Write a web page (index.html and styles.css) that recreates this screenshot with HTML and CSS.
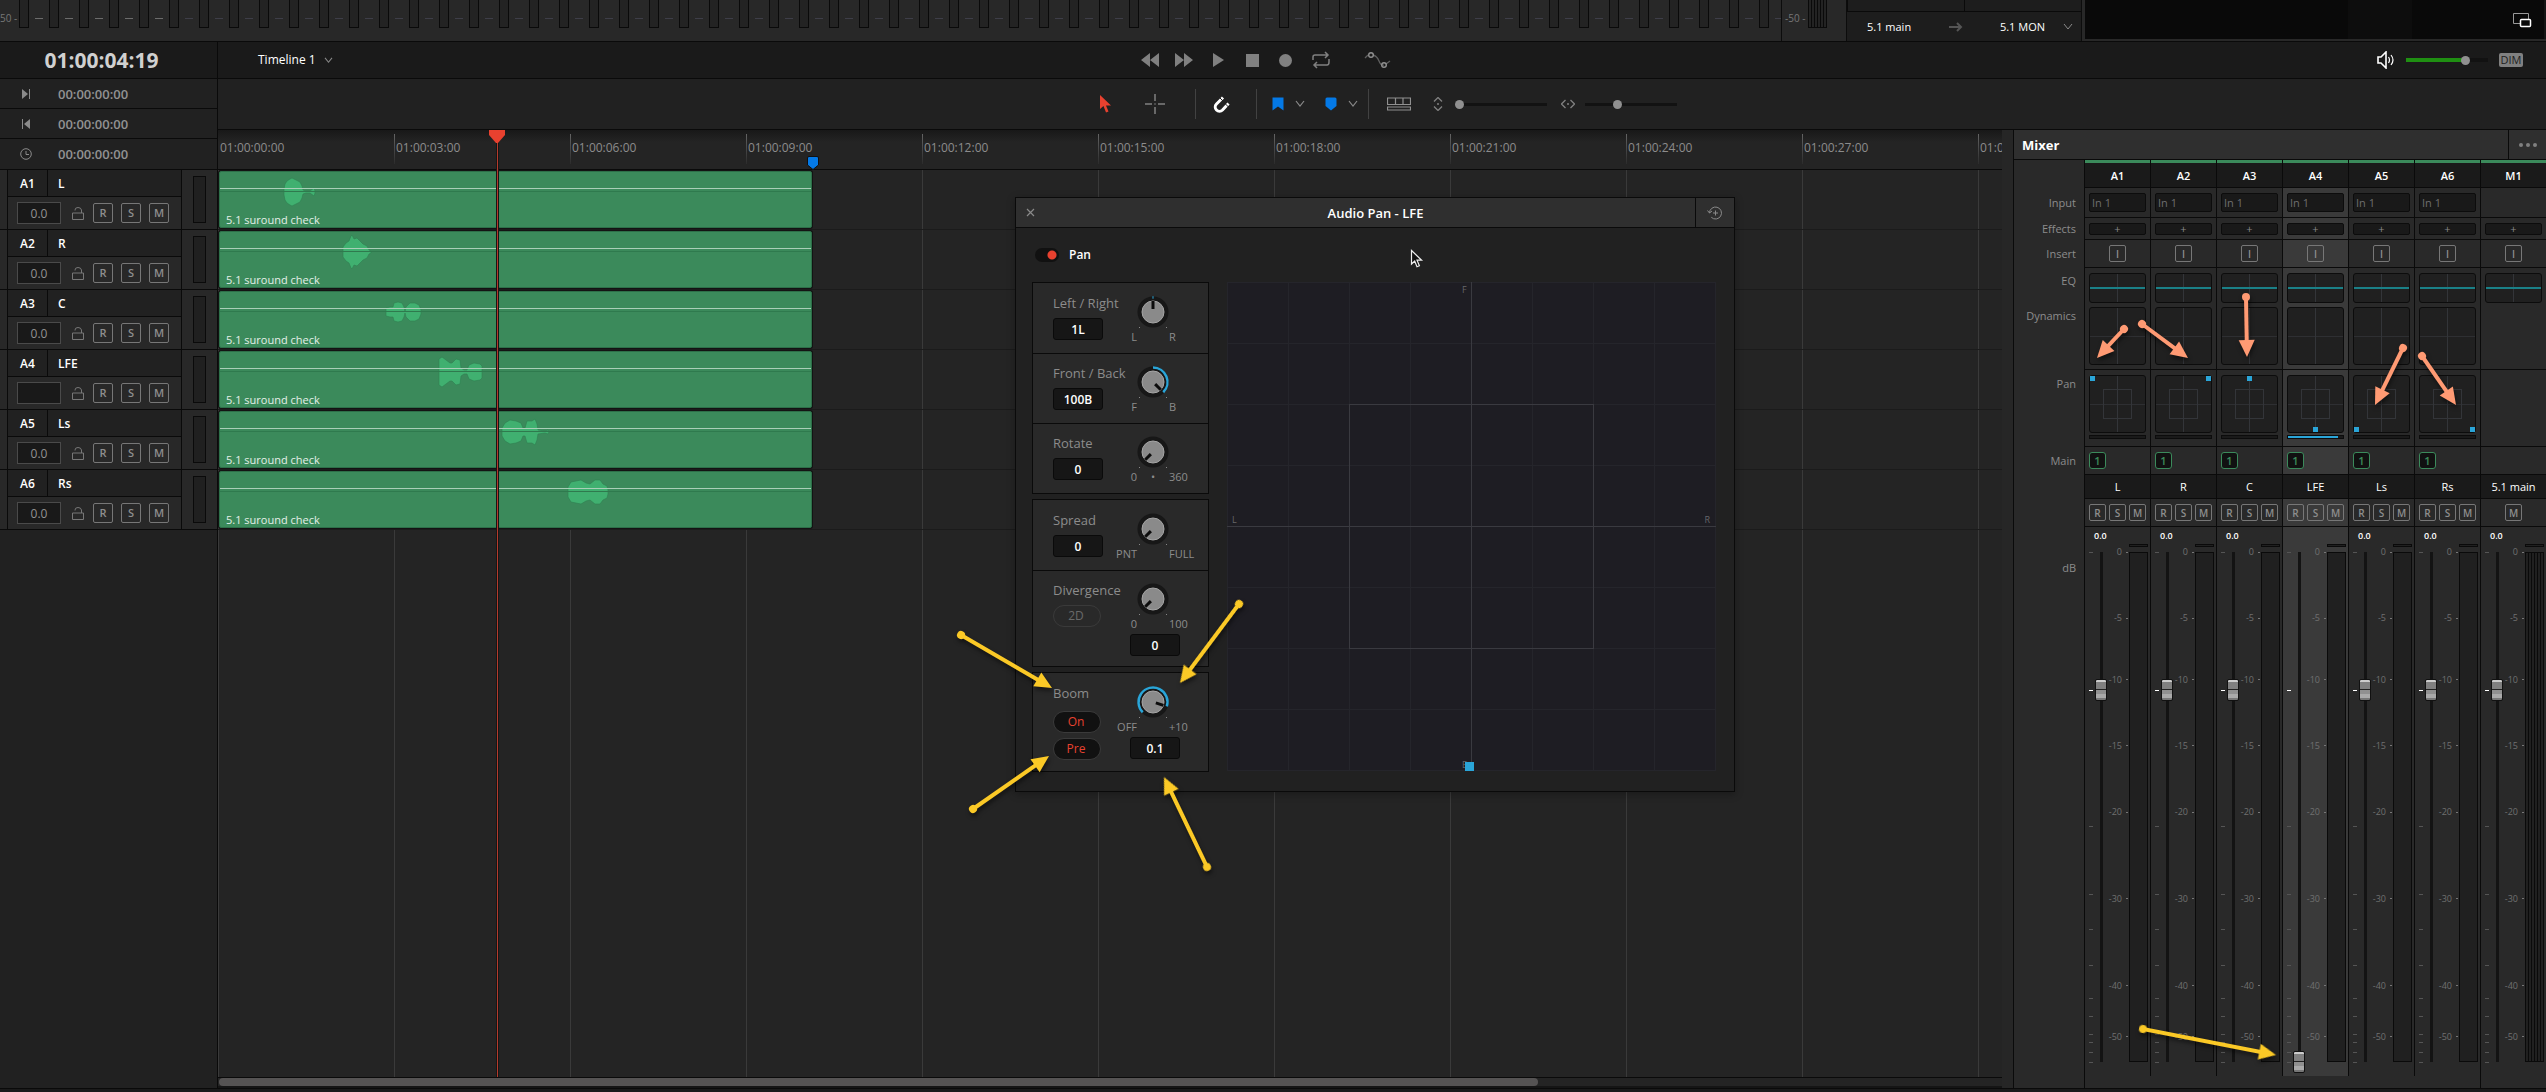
FILE: index.html
```html
<!DOCTYPE html>
<html lang="en">
<head>
<meta charset="utf-8">
<title>Audio timeline</title>
<link rel="stylesheet" href="styles.css">
</head>
<body>
<div class="app">

  <header class="monitor">
    <div class="meter-bridge">
      <span class="scale-label">50 -</span>
      <div class="bridge-bars" id="bridge"></div>
    </div>
    <div class="bus-meter">
      <span class="scale-label">-50 -</span>
      <div class="bus-bars"><i></i><i></i><i></i><i></i><i></i><i></i></div>
    </div>
    <div class="bus-panel">
      <div class="bus-top"><span></span><span></span></div>
      <div class="bus-route">
        <span>5.1 main</span>
        <svg class="icon" width="14" height="10" viewBox="0 0 14 10"><path d="M0 5h12M8 1l4 4-4 4" fill="none" stroke="#555" stroke-width="2"/></svg>
        <button class="plain route-out">5.1 MON
          <svg width="10" height="8" viewBox="0 0 10 8"><path d="M1 1l4 5 4-5" fill="none" stroke="#8a8a8a"/></svg>
        </button>
      </div>
    </div>
    <div class="viewer">
      <div class="viewer-band"></div>
      <button class="plain" aria-label="Detach viewer">
        <svg width="20" height="16" viewBox="0 0 20 16"><path d="M8 11.500H1.500V1.500H16.500V7" fill="none" stroke="#999"/><rect x="8.500" y="7.500" width="10" height="7" rx="1" fill="#0a0a0a" stroke="#fff" stroke-width="1.500"/></svg>
      </button>
    </div>
  </header>

  <div class="body">
    <aside class="side">
      <div class="timecode">01:00:04:19</div>
      <div class="info"><svg width="12" height="12" viewBox="0 0 12 12"><path d="M2 1l6 5-6 5z" fill="#8a8a8a"/><path d="M9.500 1v10" stroke="#8a8a8a"/></svg><span>00:00:00:00</span></div>
      <div class="info"><svg width="12" height="12" viewBox="0 0 12 12"><path d="M10 1L4 6l6 5z" fill="#8a8a8a"/><path d="M2.500 1v10" stroke="#8a8a8a"/></svg><span>00:00:00:00</span></div>
      <div class="info"><svg width="12" height="12" viewBox="0 0 12 12"><circle cx="6" cy="6" r="5.300" fill="none" stroke="#8a8a8a"/><path d="M6 3v3.500h3" fill="none" stroke="#8a8a8a"/></svg><span>00:00:00:00</span></div>
      <div id="tracks"></div>
    </aside>

    <div class="stage">
      <div class="transport">
        <button class="plain timeline-name">Timeline 1
          <svg width="9" height="7" viewBox="0 0 10 8"><path d="M1 1l4 5 4-5" fill="none" stroke="#8a8a8a" stroke-width="1.200"/></svg>
        </button>
        <div class="transport-buttons">
          <button class="plain" aria-label="Rewind"><svg width="18" height="14" viewBox="0 0 18 14"><path d="M9 0v14L0 7zM18 0v14L9 7z" fill="#808080"/></svg></button>
          <button class="plain" aria-label="Fast forward"><svg width="18" height="14" viewBox="0 0 18 14"><path d="M0 0v14l9-7zM9 0v14l9-7z" fill="#808080"/></svg></button>
          <button class="plain" aria-label="Play"><svg width="11" height="14" viewBox="0 0 11 14"><path d="M0 0v14l11-7z" fill="#808080"/></svg></button>
          <button class="plain" aria-label="Stop"><svg width="13" height="13" viewBox="0 0 13 13"><path d="M0 0h13v13H0z" fill="#808080"/></svg></button>
          <button class="plain" aria-label="Record"><svg width="13" height="13" viewBox="0 0 13 13"><circle cx="6.500" cy="6.500" r="6.500" fill="#808080"/></svg></button>
          <button class="plain" aria-label="Loop"><svg width="18" height="18" viewBox="0 0 18 18"><path d="M1 9V6q0-2 2-2h13M13 1l3 3-3 3M17 8v3q0 3-2 3H2M5 11l-3 3 3 3" fill="none" stroke="#808080" stroke-width="1.500"/></svg></button>
          <button class="plain" aria-label="Automation"><svg width="28" height="18" viewBox="0 0 28 18"><path d="M1 7l3-3M9 4q4 1 6 6t5 4M22 13l4-3" fill="none" stroke="#606060" stroke-width="1.300"/><circle cx="7" cy="4" r="2.300" fill="none" stroke="#909090" stroke-width="1.400"/><circle cx="20" cy="14" r="2.300" fill="none" stroke="#909090" stroke-width="1.400"/></svg></button>
        </div>
        <div class="volume">
          <svg width="18" height="18" viewBox="0 0 18 18"><path d="M1 6h3l5-5v16l-5-5H1z" fill="none" stroke="#fff" stroke-width="1.600"/><path d="M11.500 6q2 3 0 6M14 4q4 5 0 10" fill="none" stroke="#fff" stroke-width="1.200"/></svg>
          <input type="range" class="slider green" aria-label="Monitor volume" value="75">
          <button class="dim">DIM</button>
        </div>
      </div>

      <div class="toolbar">
        <button class="plain t-pointer" aria-label="Pointer"><svg width="12" height="18" viewBox="0 0 12 18"><path d="M0 0v14l3.500-3L6 17.500l2.500-1L6 10.500h5z" fill="#e8412f"/></svg></button>
        <button class="plain t-range" aria-label="Range"><svg width="20" height="20" viewBox="0 0 20 20"><path d="M0 10h7M13 10h7M10 0v7M10 13v7" stroke="#808080" stroke-width="1.500"/><circle cx="10" cy="10" r=".8" fill="#808080"/></svg></button>
        <i class="divider"></i>
        <button class="plain t-snap" aria-label="Snap"><svg width="18" height="18" viewBox="0 0 18 18"><path d="M10 2.500L3.500 9a4.200 4.200 0 0 0 6 6l6-6.500" fill="none" stroke="#fff" stroke-width="3"/><path d="M6.800 2.800l3.500 3.500M11.500 8l4 4" stroke="#212121" stroke-width="1"/></svg></button>
        <i class="divider"></i>
        <button class="plain t-flag" aria-label="Flag"><svg width="12" height="14" viewBox="0 0 12 14"><path d="M.5 .5h11v13L6 9.500.5 13.500z" fill="#0479e6"/></svg><svg class="caret" width="10" height="8" viewBox="0 0 10 8"><path d="M1 1l4 5 4-5" fill="none" stroke="#8a8a8a" stroke-width="1.200"/></svg></button>
        <button class="plain t-marker" aria-label="Marker"><svg width="12" height="14" viewBox="0 0 12 14"><path d="M.5 2q0-1.500 1.500-1.500h8q1.500 0 1.500 1.500v7L6 13.500.5 9z" fill="#0479e6"/></svg><svg class="caret" width="10" height="8" viewBox="0 0 10 8"><path d="M1 1l4 5 4-5" fill="none" stroke="#8a8a8a" stroke-width="1.200"/></svg></button>
        <i class="divider"></i>
        <button class="plain t-view" aria-label="Timeline view"><svg width="24" height="14" viewBox="0 0 24 14"><path d="M.5 1h23v6.500H.5zM8.500 1v6.500M16 1v6.500M.5 10h23v3H.5z" fill="none" stroke="#909090" stroke-width="1.200"/></svg></button>
        <svg width="10" height="14" viewBox="0 0 10 14"><path d="M1 4.500l4-4 4 4M1 9.500l4 4 4-4" fill="none" stroke="#808080" stroke-width="1.300"/><circle cx="5" cy="7" r="1" fill="#808080"/></svg>
        <input type="range" class="slider t-height" aria-label="Track height" value="0">
        <svg width="14" height="10" viewBox="0 0 14 10"><path d="M4.500 1l-4 4 4 4M9.500 1l4 4-4 4" fill="none" stroke="#808080" stroke-width="1.300"/><circle cx="7" cy="5" r="1" fill="#808080"/></svg>
        <input type="range" class="slider t-zoom" aria-label="Timeline zoom" value="34">
      </div>

      <div class="workspace">
        <main class="timeline">
          <div class="ruler" id="ruler"></div>
          <div class="lanes" id="lanes"></div>
          <div class="scroll"><div class="scroll-thumb"></div></div>
          <svg class="end-marker" width="12" height="14" viewBox="0 0 12 14"><path d="M.5 2q0-1.500 1.500-1.500h8q1.500 0 1.500 1.500v7L6 13.500.5 9z" fill="#0479e6" stroke="#111"/></svg>
          <div class="playhead"><svg width="16" height="13" viewBox="0 0 16 13"><path d="M0 0h16v5l-7 8H7L0 5z" fill="#e8412f"/></svg></div>
        </main>

        <section class="mixer" aria-label="Mixer">
          <div class="mixer-head"><h2>Mixer</h2><button class="plain dots" aria-label="Options"><i></i><i></i><i></i></button></div>
          <div class="mixer-body">
            <div class="row-labels">
              <span class="l-head"></span><span class="l-input">Input</span><span class="l-fx">Effects</span><span class="l-button">Insert</span>
              <span class="l-eq">EQ</span><span class="l-dyn">Dynamics</span><span class="l-pan">Pan</span><span class="l-button">Main</span><span class="l-db">dB</span>
            </div>
            <div class="strips" id="strips"></div>
          </div>
          <svg class="notes" width="1" height="1" aria-hidden="true" id="mixer-notes"></svg>
        </section>
      </div>
    </div>
  </div>
  <footer class="foot"></footer>

  <section class="dialog" role="dialog" aria-label="Audio Pan - LFE">
    <div class="dialog-head">
      <button class="plain close" aria-label="Close"><svg width="9" height="9" viewBox="0 0 9 9"><path d="M1 1l7 7M8 1L1 8" stroke="#8a8a8a" stroke-width="1.200"/></svg></button>
      <h2>Audio Pan - LFE</h2>
      <button class="plain reset" aria-label="Reset"><svg width="16" height="14" viewBox="0 0 16 14"><path d="M2.500 7a6 6 0 1 1 1.800 4.300M.5 4.500l2 2.500L5 5M8.500 4.500v5M6 7h5" fill="none" stroke="#8a8a8a"/></svg></button>
    </div>
    <div class="dialog-body">
      <label class="switch"><input type="checkbox" checked> Pan</label>
      <div class="pan-area">
        <div class="groups">
          <div class="group">
            <div class="control">
              <div class="control-main"><label for="lr">Left / Right</label><input id="lr" value="1L"></div>
              <div class="dial" data-angle="0" data-from="-2" data-to="2"><span>L</span><b></b><span>R</span></div>
            </div>
            <div class="control">
              <div class="control-main"><label for="fb">Front / Back</label><input id="fb" value="100B"></div>
              <div class="dial" data-angle="135" data-from="0" data-to="135"><span>F</span><b></b><span>B</span></div>
            </div>
            <div class="control">
              <div class="control-main"><label for="rot">Rotate</label><input id="rot" value="0"></div>
              <div class="dial" data-angle="-135"><span>0</span><b>•</b><span>360</span></div>
            </div>
          </div>
          <div class="group">
            <div class="control">
              <div class="control-main"><label for="spr">Spread</label><input id="spr" value="0"></div>
              <div class="dial" data-angle="-135"><span>PNT</span><b></b><span>FULL</span></div>
            </div>
            <div class="control divergence">
              <div class="control-main"><label for="div">Divergence</label><button class="pill">2D</button></div>
              <div class="dial" data-angle="-135"><span>0</span><b></b><span>100</span><input id="div" value="0"></div>
            </div>
          </div>
          <div class="group">
            <div class="control boom">
              <div class="control-main"><label for="boom">Boom</label><button class="pill on">On</button><button class="pill on">Pre</button></div>
              <div class="dial" data-angle="108" data-from="-135" data-to="108"><span>OFF</span><b></b><span>+10</span><input id="boom" value="0.1"></div>
            </div>
          </div>
        </div>
        <div class="field">
          <div class="field-box"></div>
          <span class="f-front">F</span><span class="f-left">L</span><span class="f-right">R</span><span class="f-back">B</span>
          <i class="puck"></i>
        </div>
      </div>
    </div>
    <svg class="cursor" width="14" height="20" viewBox="0 0 14 20"><path d="M1.500 1.500v13.500l3.200-3 2.300 5.800 2.400-1-2.400-5.600h4.600z" fill="#111" stroke="#eee" stroke-width="1.200"/></svg>
    <svg class="notes" width="1" height="1" aria-hidden="true" id="dialog-notes"></svg>
  </section>
</div>
<script src="app.js"></script>
</body>
</html>
```
FILE: styles.css
```css
* { box-sizing: border-box; }
body { margin: 0; background: #1a1a1a; color: #fff; font: 12px/16px "Open Sans", "Noto Sans", sans-serif; }
h2 { margin: 0; font-size: 13px; font-weight: 700; line-height: 16px; }
svg { display: block; flex: none; }
i { font-style: normal; }
button, input { font: inherit; color: inherit; margin: 0; padding: 0; }
.plain { background: none; border: 0; display: flex; align-items: center; }
.app { position: relative; min-height: 100vh; display: flex; flex-direction: column; overflow: hidden; }

/* Monitoring strip */
.monitor { height: 42px; display: flex; background: #282828; border-bottom: 1px solid #0a0a0a; overflow: hidden; }
.meter-bridge { flex: 1; display: flex; border-right: 1px solid #0c0c0c; overflow: hidden; min-width: 0; }
.scale-label { color: #777; font-size: 10px; line-height: 16px; padding-top: 10px; white-space: nowrap; }
.meter-bridge .scale-label { width: 19px; flex: none; }
.bridge-bars { display: flex; }
.bridge-bars i { width: 10px; height: 28px; margin-right: 20px; background: #232323; border: 1px solid #0a0a0a; border-top: 0; position: relative; flex: none; }
.bridge-bars i::after { content: ""; position: absolute; left: 15px; top: 18px; width: 8px; height: 1px; background: #3e3e48; }
.bridge-bars i.lit::after { background: #6c6c6c; }
.bus-meter { width: 65px; display: flex; gap: 3px; padding-left: 3px; border-right: 1px solid #0c0c0c; }
.bus-meter .scale-label { width: 20px; }
.bus-bars { display: flex; width: 19px; height: 28px; border: 1px solid #0a0a0a; border-top: 0; background: #232323; }
.bus-bars i { flex: 1; border-right: 1px solid #0a0a0a; }
.bus-bars i:last-child { border: 0; }
.bus-panel { width: 235px; background: #1d1d1d; border-right: 1px solid #0c0c0c; display: flex; flex-direction: column; }
.bus-top { height: 12px; display: flex; border-bottom: 1px solid #0a0a0a; }
.bus-top span { flex: 1; border-left: 1px solid #0a0a0a; }
.bus-route { flex: 1; display: flex; align-items: center; padding: 0 8px 0 20px; justify-content: space-between; font-size: 11px; font-weight: 500; }
.route-out { gap: 18px; }
.viewer { width: 461px; margin: 0 0 2px 3px; background: #090909; border-right: 2px solid #151515; display: flex; align-items: center; justify-content: flex-end; padding-right: 12px; }
.viewer-band { width: 64px; align-self: stretch; background: #0d0d0d; margin-right: 100px; }

.body { flex: 1; display: flex; min-height: 0; }
.foot { height: 4px; background: #1a1a1a; border-top: 1px solid #0a0a0a; }

/* Track headers */
.side { width: 218px; flex: none; background: #212121; border-right: 1px solid #0a0a0a; }
.timecode { height: 37px; line-height: 36px; background: #1a1a1a; border-bottom: 1px solid #0a0a0a; color: #d0d0d0; font-size: 21px; font-weight: 700; text-align: center; padding-right: 14px; }
.info { height: 30px; display: flex; align-items: center; gap: 26px; padding-left: 20px; border-bottom: 1px solid #0a0a0a; color: #929292; font-size: 13px; font-weight: 600; }
.info:nth-child(4) { border-bottom: 0; }
.track { height: 60px; display: flex; border-top: 1px solid #0a0a0a; }
#tracks { border-bottom: 1px solid #0a0a0a; }
.track-stub { width: 8px; background: #282828; border-right: 1px solid #0a0a0a; }
.track-main { width: 174px; border-right: 1px solid #0a0a0a; }
.track-title { height: 27px; display: flex; border-bottom: 1px solid #0a0a0a; line-height: 28px; font-weight: 600; }
.track-title b { width: 40px; text-align: center; border-right: 1px solid #0a0a0a; font-weight: 600; }
.track-title span { padding-left: 10px; }
.track-tools { height: 32px; display: flex; align-items: center; padding-left: 9px; background: #282828; }
.track-tools input { width: 44px; height: 22px; background: #191919; border: 1px solid #4a4a4a; color: #929292; text-align: center; margin-right: 11px; }
.track-tools svg { margin-right: 9px; }
.sq { width: 20px; height: 20px; border: 1px solid #777; border-radius: 2px; background: none; color: #8e8e8e; font-size: 11px; line-height: 16px; font-weight: 600; text-align: center; }
.track-tools .sq { margin-right: 8px; }
.track-meter { flex: 1; background: #282828; padding: 6px 0 0 11px; }
.track-meter i { display: block; width: 13px; height: 47px; background: #202020; border: 1px solid #0a0a0a; }

/* Transport and tools */
.stage { flex: 1; min-width: 0; display: flex; flex-direction: column; }
.transport { height: 37px; background: #1a1a1a; border-bottom: 1px solid #0a0a0a; display: grid; grid-template-columns: 4fr auto 5fr; align-items: center; }
.timeline-name { justify-self: start; padding-left: 40px; gap: 8px; font-size: 12px; font-weight: 500; }
.transport-buttons { display: flex; align-items: center; gap: 20px; }
.transport-buttons .plain:nth-child(-n+2) { margin-right: -4px; }
.transport-buttons .plain:nth-child(3) { margin-right: 2px; margin-left: 4px; }
.transport-buttons .plain:nth-child(7) { margin-left: 14px; }
.volume { justify-self: end; display: flex; align-items: center; gap: 11px; padding-right: 23px; }
.dim { width: 24px; height: 14px; border: 0; border-radius: 2px; background: #808080; color: #1d1d1d; font-size: 11px; line-height: 14px; font-weight: 500; }
.slider { appearance: none; -webkit-appearance: none; width: 82px; height: 14px; background: linear-gradient(#121212, #121212) center / 100% 3px no-repeat; }
.slider.green { background: linear-gradient(90deg, #1f8f12 75%, #121212 75%) center / 100% 4px no-repeat; }
.slider::-webkit-slider-thumb { -webkit-appearance: none; width: 9px; height: 9px; border-radius: 50%; background: #909090; }
.toolbar { height: 51px; background: #212121; border-bottom: 1px solid #0a0a0a; display: flex; align-items: center; justify-content: center; padding-left: 13px; }
.divider { width: 1px; height: 30px; background: #424242; }
.t-range { margin: 0 30px 0 33px; }
.t-snap { margin: 0 25px 0 17px; }
.t-flag { margin: 0 20px 0 15px; gap: 11px; }
.t-marker { margin-right: 10px; gap: 11px; }
.t-view { margin: 0 22px 0 18px; }
.t-height, .t-zoom { width: 92px; }
.t-height { margin: 0 14px 0 12px; }
.t-zoom { margin-left: 10px; }

/* Timeline */
.workspace { flex: 1; display: flex; min-height: 0; }
.timeline { flex: 1; min-width: 0; position: relative; display: flex; flex-direction: column; overflow: hidden; background: #242424; }
.ruler { height: 40px; flex: none; display: flex; overflow: hidden; border-bottom: 1px solid #0a0a0a; background: linear-gradient(#181818, #242424 12px); }
.ruler span { width: 176px; flex: none; padding: 4px 0 0 1px; line-height: 20px; margin-top: 4px; height: 30px; color: #8c8c8c; border-left: 1px solid; border-image: linear-gradient(#666, #2a2a2a) 1; }
.ruler span:last-child { width: 26px; overflow: hidden; }
.ruler span:first-child { border-image: none; border-color: transparent; }
.lanes { flex: 1; background: repeating-linear-gradient(90deg, #3a3a3a 0 1px, transparent 1px 176px); }
.lane { height: 60px; padding: 1px; border-bottom: 1px solid #1b1b1b; }
.clip { width: 593px; height: 57px; background: #3b8a5b; border: 1px solid #2d6f49; border-radius: 2px; position: relative; display: flex; align-items: flex-end; padding: 0 6px; box-shadow: 0 0 0 1px #131313; color: #e4efe8; font-size: 11px; line-height: 14px; }
.clip svg { position: absolute; left: 0; top: 0; }
.scroll { height: 11px; flex: none; border-top: 1px solid #0a0a0a; border-bottom: 2px solid #151515; padding-left: 1px; }
.scroll-thumb { width: 74%; height: 8px; border-radius: 4px; background: #555353; }
.end-marker { position: absolute; left: 589px; top: 26px; }
.playhead { position: absolute; left: 271px; top: 0; bottom: 11px; width: 16px; background: linear-gradient(90deg, #161616 0 1px, #b53a2c 1px 2px, #161616 2px 3px) 7px 0 / 3px 100% no-repeat; }

/* Mixer */
.mixer { width: 544px; flex: none; position: relative; display: flex; flex-direction: column; border-left: 11px solid #262626; background: #292929; box-shadow: inset 1px 0 #0a0a0a; padding-left: 1px; }
.mixer-head { height: 30px; flex: none; display: flex; align-items: center; background: #2f2f2f; border-bottom: 1px solid #0a0a0a; padding-left: 8px; }
.mixer-head h2 { flex: 1; }
.dots { width: 38px; align-self: stretch; justify-content: center; gap: 3px; border-left: 1px solid #0a0a0a; }
.dots i { width: 4px; height: 4px; border-radius: 50%; background: #808080; }
.mixer-body { flex: 1; display: flex; min-height: 0; }
.row-labels { width: 70px; display: flex; flex-direction: column; align-items: flex-end; padding-right: 8px; color: #8c8c8c; font-size: 11px; }
.l-head { height: 28px; }
.l-input { height: 30px; line-height: 30px; }
.l-fx { height: 22px; line-height: 22px; }
.l-button { height: 28px; line-height: 28px; }
.l-eq { height: 34px; line-height: 26px; }
.l-dyn { height: 68px; line-height: 28px; }
.l-pan { height: 77px; line-height: 28px; }
.l-db { margin-top: 80px; line-height: 26px; }
.strips { flex: 1; display: flex; }
.strip { flex: 1; display: flex; flex-direction: column; border-left: 1px solid #0a0a0a; margin-bottom: 12px; min-width: 0; }
.strip:first-child, .strip:last-child { margin-bottom: 0; padding-bottom: 12px; }
.strip.active { background: #3a3a3a; }
.strip > div { border-bottom: 1px solid #0a0a0a; padding: 0 4px; flex: none; }
.strip .s-id { height: 28px; border-top: 3px solid #3b8a5b; background: #1a1a1a; text-align: center; line-height: 26px; font-size: 11px; font-weight: 600; padding: 0; }
.strip .s-name { height: 24px; background: #1a1a1a; text-align: center; line-height: 24px; font-size: 11px; font-weight: 500; white-space: nowrap; padding: 0; }
.strip .s-input { height: 30px; padding-top: 5px; }
.s-input input { width: 57px; height: 19px; background: #191919; border: 1px solid #0c0c0c; border-radius: 2px; color: #6e6e6e; padding-left: 2px; display: block; font-size: 11px; }
.strip .s-fx { height: 22px; padding-top: 5px; }
.s-fx button { width: 57px; height: 12px; display: block; background: #191919; border: 1px solid #0c0c0c; border-radius: 2px; color: #888; font-size: 11px; line-height: 8px; }
.mini { width: 17px; height: 17px; border: 1px solid #777; border-radius: 2px; background: none; color: #8e8e8e; font-size: 10px; line-height: 14px; font-weight: 600; text-align: center; flex: none; }
.s-insert, .s-main, .s-rsm { height: 28px; display: flex; align-items: center; gap: 3px; }
.s-insert, .s-rsm { justify-content: center; }
.mini.send { border-color: #3b8a5b; background: #111; color: #3b8a5b; border-radius: 3px; font-size: 11px; }
.strip .s-dyn { height: 102px; padding-top: 5px; }
.strip .s-pan { height: 77px; padding-top: 5px; }
.box { width: 57px; height: 58px; background: linear-gradient(#333539, #333539) center / 1px 100% no-repeat, linear-gradient(#2e2f32, #2e2f32) center / 100% 1px no-repeat, #202020; border: 1px solid #0c0c0c; border-radius: 3px; position: relative; }
.box.eq { height: 30px; margin-bottom: 4px; background: linear-gradient(#1a8087, #1a8087) center / 100% 2px no-repeat, linear-gradient(#333539, #333539) center / 1px 100% no-repeat, #202020; }
.box.pan::before { content: ""; position: absolute; inset: 13px; border: 1px solid #333539; }
.box.pan i { position: absolute; width: 5px; height: 5px; background: #2aa5d8; }
.boom-bar { width: 57px; height: 4px; margin-top: 2px; background: #1a1a1a; border: 1px solid #0c0c0c; }
.boom-bar.lit { background: linear-gradient(90deg, #2aa5d8 90%, #1a1a1a 90%); }
.strip .s-value { height: 17px; border: 0; padding-left: 9px; font-size: 9px; line-height: 17px; font-weight: 600; }
.strip .s-fader { flex: 1; border: 0; display: flex; flex-direction: column; padding: 0 2px 14px 4px; }
.clip-light { width: 19px; height: 3px; border: 1px solid #0a0a0a; background: #202020; align-self: flex-end; margin-bottom: 5px; }
.fader { flex: 1; display: flex; position: relative; min-height: 0; }
.ticks { width: 4px; position: relative; }
.ticks i { position: absolute; width: 4px; height: 1px; background: #555; }
.ticks i.unity { background: #fff; }
.fader input { appearance: none; -webkit-appearance: none; writing-mode: vertical-lr; direction: rtl; width: 12px; height: auto; margin: -11px 1px -11px 2px; z-index: 1; background: linear-gradient(#131313, #131313) center / 3px calc(100% - 22px) no-repeat; }
.fader input::-webkit-slider-thumb { -webkit-appearance: none; width: 12px; height: 22px; border: 1px solid #111; border-radius: 2px; background: linear-gradient(#ccc 0 2px, #808080 2px 9px, #222 9px 10px, #909090 10px 14px, #aaa 14px 18px, #777 18px); }
.numbers { width: 20px; position: relative; }
.numbers span { position: absolute; right: 0; line-height: 14px; margin-top: -7px; font-size: 9px; color: #707070; white-space: nowrap; display: flex; align-items: center; gap: 4px; }
.numbers span::after { content: ""; width: 2px; height: 1px; background: #777; }
.meter { width: 19px; margin-left: 1px; border: 1px solid #0a0a0a; background: #202020; }
.meter.multi { background: repeating-linear-gradient(90deg, #202020 0 2px, #0a0a0a 2px 3px); }

/* Pan window */
.dialog { position: absolute; left: 1015px; top: 197px; width: 720px; background: #212121; border: 1px solid #0a0a0a; box-shadow: 0 2px 8px rgba(0, 0, 0, .3); }
.dialog-head { height: 30px; display: flex; align-items: center; background: #2f2f2f; border-bottom: 1px solid #0a0a0a; }
.dialog-head h2 { flex: 1; text-align: center; font-weight: 600; padding-left: 12px; }
.close { width: 28px; justify-content: center; }
.reset { width: 39px; align-self: stretch; justify-content: center; border-left: 1px solid #0a0a0a; }
.dialog-body { padding: 18px 18px 19px 16px; }
.switch { display: inline-flex; align-items: center; gap: 10px; height: 18px; margin: 0 0 18px 3px; font-weight: 600; }
.switch input { appearance: none; width: 24px; height: 14px; border-radius: 7px; background: radial-gradient(circle at 17px 7px, #e8412f 4px, transparent 5px), #111; }
.pan-area { display: flex; gap: 18px; }
.groups { width: 177px; display: flex; flex-direction: column; gap: 5px; }
.group { border: 1px solid #0a0a0a; background: #292929; }
.control { height: 70px; display: flex; padding: 12px 0 0 20px; }
.control + .control { border-top: 1px solid #0a0a0a; padding-top: 11px; }
.control.divergence { height: 96px; }
.control.boom { height: 98px; }
.control-main { width: 60px; display: flex; flex-direction: column; gap: 7px; color: #8c8c8c; }
.control-main label { white-space: nowrap; font-size: 13px; }
.boom .control-main { gap: 5px; }
.boom .control-main label { margin-bottom: 5px; }
.control input { width: 50px; height: 22px; background: #161616; border: 1px solid #0a0a0a; border-radius: 3px; color: #fff; text-align: center; font-weight: 600; font-size: 12px; }
.pill { width: 48px; height: 22px; border: 1px solid #3a3a3a; border-radius: 11px; background: none; color: #6a6a6a; font-size: 12px; line-height: 18px; padding-right: 2px; flex: none; }
.pill.on { background: #111; color: #e8412f; }
.dial { display: grid; grid-template-columns: 24px 32px 24px; width: 80px; color: #8c8c8c; font-size: 11px; align-content: start; }
.dial svg { grid-column: 1 / -1; justify-self: center; }
.dial span:first-of-type { text-align: right; }
.dial b { text-align: center; font-weight: 400; }
.dial input { grid-column: 1 / -1; justify-self: center; margin: 2px 0 0 4px; }
.field { flex: 1; aspect-ratio: 1; max-width: 489px; align-self: flex-start; position: relative; background:
  linear-gradient(#3a3a40, #3a3a40) center / 1px 100% no-repeat,
  linear-gradient(#3a3a40, #3a3a40) center / 100% 1px no-repeat,
  repeating-linear-gradient(90deg, #25252b 0 1px, transparent 1px 61px),
  repeating-linear-gradient(#25252b 0 1px, transparent 1px 61px), #1e1d23; }
.field-box { position: absolute; inset: 25%; border: 1px solid #3a3a40; }
.field span { position: absolute; color: #66666a; font-size: 9px; line-height: 12px; }
.f-front { left: 235px; top: 2px; }
.f-left { left: 5px; top: 232px; }
.f-right { right: 6px; top: 232px; }
.f-back { left: 235px; bottom: 0; }
.puck { position: absolute; left: 238px; bottom: 0; width: 9px; height: 9px; background: #2aa5d8; }
.cursor { position: absolute; left: 394px; top: 51px; }
.notes { position: absolute; left: 0; top: 0; overflow: visible; pointer-events: none; filter: drop-shadow(1px 3px 2px rgba(0, 0, 0, .5)); z-index: 2; }
```
FILE: app.js
```js
const names = ['L', 'R', 'C', 'LFE', 'Ls', 'Rs'];
const $ = id => document.getElementById(id);

// Waveform envelopes: [x, half height] pairs measured from the clip start
const waves = [
  [[64,3],[65,8],[67,11],[70,13],[72,14],[76,12],[80,10],[82,6],[83,2],[86,1],[90,1],[94,4],[95,1]],
  [[123,5],[126,9],[129,11],[131,16],[132,17],[134,13],[137,14],[140,11],[143,8],[147,6],[149,2],[151,1]],
  [[166,4],[170,5],[173,5],[174,9],[178,10],[182,9],[184,5],[185,1],[186,5],[190,9],[195,9],[199,7],[201,2]],
  [[219,4],[219,13],[222,15],[230,9],[232,9],[236,13],[240,12],[241,4],[244,2],[247,2],[249,7],[254,9],[260,8],[262,6],[262,1]],
  [[282,4],[285,9],[290,12],[296,11],[301,9],[303,4],[305,4],[307,11],[312,11],[315,13],[317,8],[318,2],[325,1],[328,2],[329,0]],
  [[348,5],[351,10],[356,11],[361,12],[366,9],[370,8],[375,12],[380,12],[383,8],[387,6],[388,2]]
];
const mid = 20;

$('bridge').innerHTML = Array.from({ length: 59 }, (_, i) => `<i class="${i < 5 ? 'lit' : ''}"></i>`).join('');

$('tracks').innerHTML = names.map((n, i) => `
  <div class="track"><div class="track-stub"></div>
    <div class="track-main">
      <div class="track-title"><b>A${i + 1}</b><span>${n}</span></div>
      <div class="track-tools">
        <input aria-label="${n} level" value="${n === 'LFE' ? '' : '0.0'}">
        <svg width="12" height="13" viewBox="0 0 12 13"><path d="M.5 6h11v6.500H.5zM3 3.500V3q0-2.500 3-2.500T9.500 3v3" fill="none" stroke="#777"/></svg>
        <button class="sq">R</button><button class="sq">S</button><button class="sq">M</button>
      </div>
    </div>
    <div class="track-meter"><i></i></div>
  </div>`).join('');

$('ruler').innerHTML = Array.from({ length: 11 }, (_, i) =>
  `<span>01:00:${String(i * 3).padStart(2, '0')}:00</span>`).join('');

$('lanes').innerHTML = waves.map(w => {
  const top = w.map(([x, h]) => `${x} ${mid - h}`);
  const bottom = w.map(([x, h]) => `${x} ${mid + h}`).reverse();
  return `<div class="lane"><div class="clip">
    <svg width="591" height="55"><path d="M${[...top, ...bottom].join('L')}z" fill="#40b070" stroke="#2f7f50" stroke-width=".6"/>
      <path d="M0 19.500H591" stroke="#2f7a4e"/><path d="M0 16.500H591" stroke="#a9cfb8"/></svg>5.1 suround check</div></div>`;
}).join('');

const ticks = [0, 27, 53.700, 67, 74, 81, 87.500, 91, 94.500, 96, 98, 100];
const numbers = [[0, 0], [-5, 13], [-10, 25], [-15, 38], [-20, 51], [-30, 68], [-40, 85], [-50, 95]];
const pucks = ['left:0;top:0', 'right:0;top:0', 'left:25px;top:0', 'left:25px;bottom:0', 'left:0;bottom:0', 'right:0;bottom:0'];
const fader = (label, level, multi) => `
  <div class="s-fader"><span class="clip-light"></span><div class="fader">
    <div class="ticks">${ticks.map(t => `<i class="${t === 27 ? 'unity' : ''}" style="top:${t}%"></i>`).join('')}</div>
    <input type="range" aria-label="${label} fader" value="${level}">
    <div class="numbers">${numbers.map(([n, t]) => `<span style="top:${t}%">${n}</span>`).join('')}</div>
    <div class="meter${multi ? ' multi' : ''}"></div>
  </div></div>`;

$('strips').innerHTML = names.map((n, i) => `
  <div class="strip${n === 'LFE' ? ' active' : ''}">
    <div class="s-id">A${i + 1}</div>
    <div class="s-input"><input aria-label="${n} input" value="In 1"></div>
    <div class="s-fx"><button>+</button></div>
    <div class="s-insert"><button class="mini">I</button></div>
    <div class="s-dyn"><div class="box eq"></div><div class="box"></div></div>
    <div class="s-pan"><div class="box pan"><i style="${pucks[i]}"></i></div><div class="boom-bar${n === 'LFE' ? ' lit' : ''}"></div></div>
    <div class="s-main"><button class="mini send">1</button></div>
    <div class="s-name">${n}</div>
    <div class="s-rsm"><button class="mini">R</button><button class="mini">S</button><button class="mini">M</button></div>
    <div class="s-value">${n === 'LFE' ? '' : '0.0'}</div>
    ${fader(n, n === 'LFE' ? 0 : 73)}
  </div>`).join('') + `
  <div class="strip">
    <div class="s-id">M1</div>
    <div class="s-input"></div>
    <div class="s-fx"><button>+</button></div>
    <div class="s-insert"><button class="mini">I</button></div>
    <div class="s-dyn"><div class="box eq"></div></div>
    <div class="s-pan"></div>
    <div class="s-main"></div>
    <div class="s-name">5.1 main</div>
    <div class="s-rsm"><button class="mini">M</button></div>
    <div class="s-value">0.0</div>
    ${fader('Main', 73, true)}
  </div>`;

// Rotary knobs
const at = (deg, r) => {
  const a = deg * Math.PI / 180;
  return `${17 + r * Math.sin(a)} ${17 - r * Math.cos(a)}`;
};
document.querySelectorAll('.dial').forEach(d => {
  const { angle, from, to } = d.dataset;
  const arc = from === undefined ? '' :
    `<path d="M${at(+from, 14.500)}A14.500 14.500 0 ${to - from > 180 ? 1 : 0} 1 ${at(+to, 14.500)}" fill="none" stroke="#2aa5d8" stroke-width="2.500"/>`;
  d.insertAdjacentHTML('afterbegin', `<svg width="34" height="34" viewBox="0 0 34 34">
    <circle cx="17" cy="17" r="15.500" fill="#171717"/>
    <circle cx="17" cy="17" r="11" fill="#8a8a8a" stroke="#a6a6a6" stroke-width="1"/>${arc}
    <path d="M${at(+angle, 3)}L${at(+angle, 11)}" stroke="#0c0c0c" stroke-width="3"/>
    <path d="M4 32l-1 1M30 32l1 1" stroke="#888"/></svg>`);
});

// Callout arrows: dot at the tail, filled head at the tip
const arrow = (x1, y1, x2, y2, color) => {
  const len = Math.hypot(x2 - x1, y2 - y1);
  const rot = Math.atan2(y2 - y1, x2 - x1) * 180 / Math.PI;
  return `<g transform="translate(${x1} ${y1}) rotate(${rot})" fill="${color}">
    <circle r="4"/><path d="M0-2H${len - 13}V2H0z"/><path d="M${len} 0L${len - 17}-8V8z"/></g>`;
};
$('dialog-notes').innerHTML = [[-55, 437, 36, 490], [223, 406, 164, 485], [-43, 611, 33, 558], [191, 669, 148, 579]]
  .map(a => arrow(...a, '#fbc926')).join('');
$('mixer-notes').innerHTML = [[111, 199, 84, 228], [129, 194, 175, 228], [233, 167, 234, 227], [390, 218, 362, 275], [409, 226, 443, 275]]
  .map(a => arrow(...a, '#ff9a73')).join('') + arrow(130, 899, 263, 925, '#fbc926');
```
